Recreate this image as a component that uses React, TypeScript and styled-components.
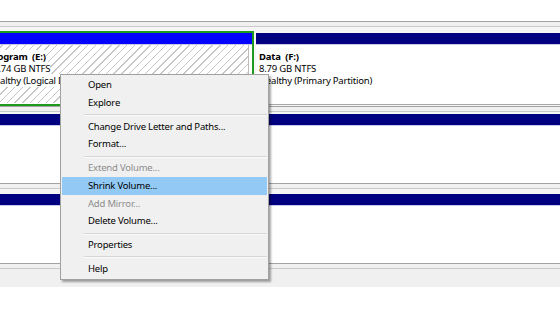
import React from 'react';
import styled, { createGlobalStyle } from 'styled-components';

const GlobalStyle = createGlobalStyle`
  html, body {
    margin: 0;
    padding: 0;
    background: #ffffff;
  }
  body {
    font-family: "Noto Sans", "Liberation Sans", sans-serif;
    font-size: 9.5px;
    letter-spacing: -0.2px;
    color: #000;
  }
`;

const Page = styled.div`
  position: relative;
  width: 560px;
  height: 336px;
  overflow: hidden;
  padding-top: 21px;
  box-sizing: border-box;
`;

const DiskRow = styled.div`
  border-top: 1px solid #a3a3a3;
  background: #f0f0f0;
  padding-top: 4px;
`;

const InnerRule = styled.div<{ $pad: number }>`
  border-top: 1px solid #c9c9c9;
  background: #f5f5f5;
  padding-top: ${p => p.$pad}px;
`;

const Partitions = styled.div`
  display: flex;
  align-items: flex-start;
  gap: 2px;
`;

const SelectedPart = styled.div`
  flex: 0 0 auto;
  width: 252px;
  margin-left: -20px;
  padding-left: 20px;
  border: 2px solid #1f9a1f;
  border-left: none;
  box-sizing: content-box;
  background: #fff;
`;

const Bar = styled.div<{ $color: string; $h: number }>`
  height: ${p => p.$h}px;
  background: ${p => p.$color};
  border-bottom: 1px solid #c8c8e8;
`;

const Hatch = styled.div`
  height: 58px;
  margin: 0 3px 1px -20px;
  padding-left: 3px;
  border-right: 1px solid #bdbdbd;
  background: repeating-linear-gradient(
    135deg,
    #ffffff 0px,
    #ffffff 4.5px,
    #c6c6c6 4.5px,
    #c6c6c6 5.5px
  );
`;

const PlainPart = styled.div`
  flex: 1 1 auto;
  margin-top: 2px;
  background: #fff;
  border-bottom: 1px solid #a8a8a8;
`;

const PartBody = styled.div<{ $h: number; $left?: number }>`
  height: ${p => p.$h}px;
  padding: 6px 0 0 ${p => p.$left ?? 5}px;
  box-sizing: border-box;
`;

const FullPart = styled.div`
  background: #fff;
`;

const InfoLine = styled.div<{ $bold?: boolean }>`
  line-height: 12px;
  height: 12px;
  white-space: nowrap;
  font-weight: ${p => (p.$bold ? 700 : 400)};
  span {
    background: #fff;
  }
`;

const Footer = styled.div`
  border-top: 1px solid #a3a3a3;
  background: #f0f0f0;
  padding-top: 4px;
`;

const FooterBand = styled.div`
  border-top: 1px solid #c9c9c9;
  height: 18px;
`;

const Menu = styled.div`
  position: absolute;
  left: 60px;
  top: 74px;
  width: 205px;
  padding: 1px;
  background: #f0f0f0;
  border: 1px solid #a0a0a0;
  box-shadow: 2px 2px 2px rgba(0, 0, 0, 0.35);
`;

const Item = styled.div<{ $disabled?: boolean; $active?: boolean }>`
  height: 17.75px;
  line-height: 18.5px;
  padding-left: 26px;
  white-space: nowrap;
  color: ${p => (p.$disabled ? '#8d8d8d' : '#000')};
  background: ${p => (p.$active ? '#93c9f5' : 'transparent')};
`;

const Separator = styled.div`
  height: 6px;
  display: flex;
  align-items: center;
  padding-left: 22px;
  &::after {
    content: '';
    flex: 1;
    height: 1px;
    background: #d6d6d6;
    box-shadow: 0 1px 0 #fafafa;
  }
`;

type Entry = { label?: string; disabled?: boolean; active?: boolean; sep?: boolean };

const entries: Entry[] = [
  { label: 'Open' },
  { label: 'Explore' },
  { sep: true },
  { label: 'Change Drive Letter and Paths...' },
  { label: 'Format...' },
  { sep: true },
  { label: 'Extend Volume...', disabled: true },
  { label: 'Shrink Volume...', active: true },
  { label: 'Add Mirror...', disabled: true },
  { label: 'Delete Volume...' },
  { sep: true },
  { label: 'Properties' },
  { sep: true },
  { label: 'Help' },
];

export default function App() {
  return (
    <>
      <GlobalStyle />
      <Page>
        <DiskRow>
          <InnerRule $pad={4}>
            <Partitions>
              <SelectedPart>
                <Bar $color="#0000ff" $h={11} />
                <Hatch>
                  <PartBody $h={58}>
                    <InfoLine $bold><span>Program&nbsp; (E:)</span></InfoLine>
                    <InfoLine><span>50.74 GB NTFS</span></InfoLine>
                    <InfoLine><span>Healthy (Logical Drive)</span></InfoLine>
                  </PartBody>
                </Hatch>
              </SelectedPart>
              <PlainPart>
                <Bar $color="#000080" $h={11} />
                <PartBody $h={59} $left={3}>
                  <InfoLine $bold>Data&nbsp; (F:)</InfoLine>
                  <InfoLine>8.79 GB NTFS</InfoLine>
                  <InfoLine>Healthy (Primary Partition)</InfoLine>
                </PartBody>
              </PlainPart>
            </Partitions>
          </InnerRule>
        </DiskRow>

        <DiskRow>
          <InnerRule $pad={2}>
            <FullPart>
              <Bar $color="#000080" $h={11} />
              <PartBody $h={57} />
            </FullPart>
          </InnerRule>
        </DiskRow>

        <DiskRow>
          <InnerRule $pad={5}>
            <FullPart>
              <Bar $color="#000080" $h={11} />
              <PartBody $h={57} />
            </FullPart>
          </InnerRule>
        </DiskRow>

        <Footer>
          <FooterBand />
        </Footer>

        <Menu>
          {entries.map((e, i) =>
            e.sep ? (
              <Separator key={i} />
            ) : (
              <Item key={i} $disabled={e.disabled} $active={e.active}>
                {e.label}
              </Item>
            )
          )}
        </Menu>
      </Page>
    </>
  );
}
